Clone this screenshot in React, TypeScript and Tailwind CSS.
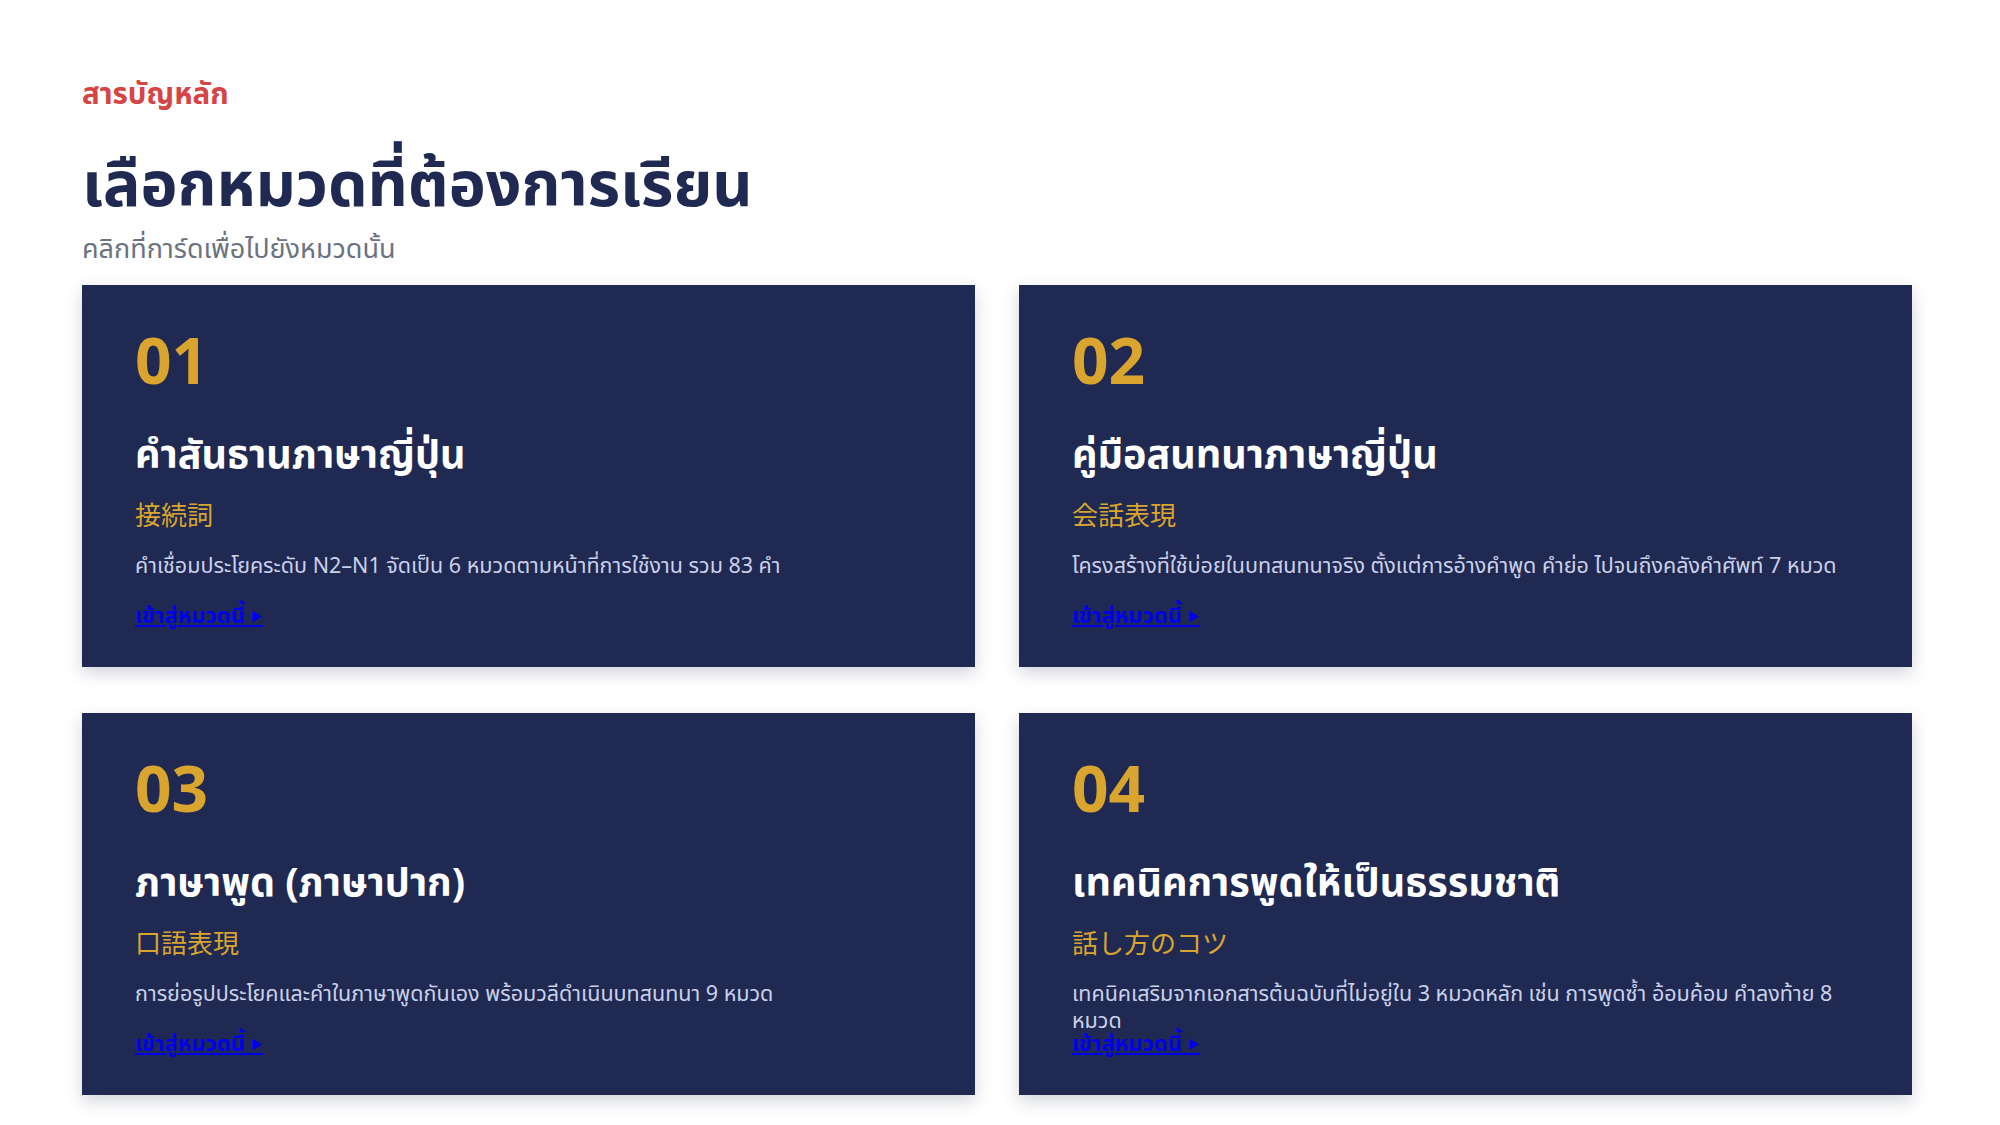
import { Fragment } from 'react';

const FONT = { fontFamily: '"Noto Sans", "Noto Sans Thai", "Noto Sans CJK JP", sans-serif' };

const CHAPTERS = [
    {
        no: '01',
        title: 'คำสันธานภาษาญี่ปุ่น',
        jp: '接続詞',
        desc: 'คำเชื่อมประโยคระดับ N2–N1 จัดเป็น 6 หมวดตามหน้าที่การใช้งาน รวม 83 คำ',
    },
    {
        no: '02',
        title: 'คู่มือสนทนาภาษาญี่ปุ่น',
        jp: '会話表現',
        desc: 'โครงสร้างที่ใช้บ่อยในบทสนทนาจริง ตั้งแต่การอ้างคำพูด คำย่อ ไปจนถึงคลังคำศัพท์ 7 หมวด',
    },
    {
        no: '03',
        title: 'ภาษาพูด (ภาษาปาก)',
        jp: '口語表現',
        desc: 'การย่อรูปประโยคและคำในภาษาพูดกันเอง พร้อมวลีดำเนินบทสนทนา 9 หมวด',
    },
    {
        no: '04',
        title: 'เทคนิคการพูดให้เป็นธรรมชาติ',
        jp: '話し方のコツ',
        desc: 'เทคนิคเสริมจากเอกสารต้นฉบับที่ไม่อยู่ใน 3 หมวดหลัก เช่น การพูดซ้ำ อ้อมค้อม คำลงท้าย 8 หมวด',
    },
];

function ChapterCard({ no, title, jp, desc }: (typeof CHAPTERS)[number]) {
    return (
        <div className="flex flex-col bg-[#1f2952] px-[53px] pt-[43px] pb-[38px] shadow-[0_6px_16px_rgba(31,41,82,0.2)]">
            <div className="text-[64px] font-bold leading-[64px] text-[#d9a52e]">{no}</div>
            <h2 className="mt-[37px] text-[39.5px] font-bold leading-[48px] text-white">{title}</h2>
            <div className="mt-[20px] text-[26px] leading-[36px] text-[#d9a52e]">{jp}</div>
            {/* fixed height so the link stays put when the text wraps */}
            <p className="mt-[18px] h-[27px] text-[21.5px] leading-[27px] text-[#cbd1ea]">{desc}</p>
            <a href="#" className="mt-[21px] self-start text-[22px] font-bold leading-[30px] text-[#0000ee] underline">
                เข้าสู่หมวดนี้ <span className="text-[12px] leading-none align-middle">▶</span>
            </a>
        </div>
    );
}

export default function App() {
    return (
        <div style={FONT} className="min-h-screen bg-white pl-[82px] pr-[88px] pt-[75px] pb-[30px]">
            <div className="text-[29.5px] font-bold leading-[36px] text-[#d64545]">สารบัญหลัก</div>
            <h1 className="mt-[37px] text-[62.5px] font-bold leading-[67px] text-[#1f2952]">เลือกหมวดที่ต้องการเรียน</h1>
            <p className="mt-[15px] text-[27px] leading-[36px] text-[#6b7280]">คลิกที่การ์ดเพื่อไปยังหมวดนั้น</p>

            <div className="mt-[19px] grid grid-cols-2 gap-x-[44px] gap-y-[46px]">
                {CHAPTERS.map((c) => (
                    <Fragment key={c.no}>
                        <ChapterCard {...c} />
                    </Fragment>
                ))}
            </div>
        </div>
    );
}
